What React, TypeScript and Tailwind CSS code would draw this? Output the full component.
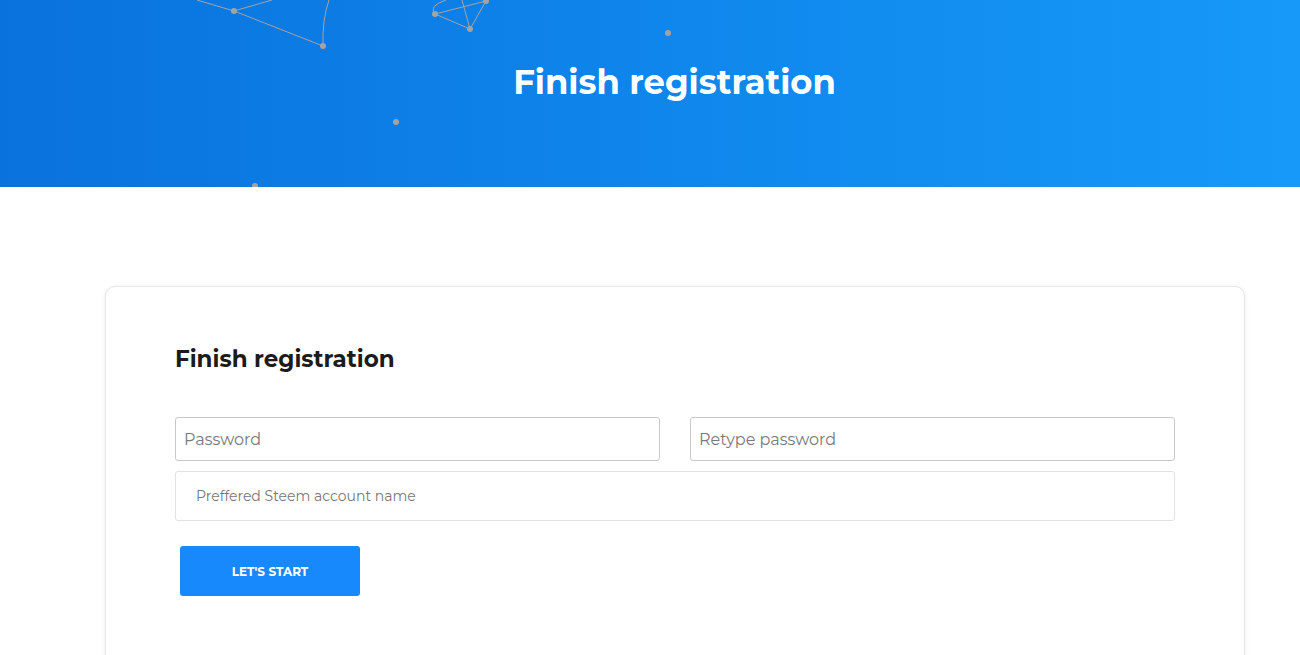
import React from "react";

const dots: [number, number][] = [
  [234, 11],
  [323, 46],
  [435, 14],
  [470, 29],
  [486, 1],
  [396, 122],
  [255, 186],
  [668, 33],
];

function Particles() {
  return (
    <svg
      className="absolute inset-0 h-full w-full"
      viewBox="0 0 1300 187"
      preserveAspectRatio="none"
    >
      <g stroke="#a3a3a3" strokeWidth="1" fill="none">
        <line x1="197" y1="0" x2="234" y2="11" />
        <line x1="234" y1="11" x2="272" y2="0" />
        <line x1="234" y1="11" x2="323" y2="46" />
        <path d="M323 46 Q322 20 329 0" />
        <line x1="435" y1="14" x2="470" y2="29" />
        <line x1="435" y1="14" x2="486" y2="1" />
        <line x1="486" y1="1" x2="470" y2="29" />
        <line x1="462" y1="0" x2="470" y2="29" />
        <path d="M435 14 Q428 6 446 0" />
      </g>
      <g fill="#a3a3a3">
        {dots.map(([x, y]) => (
          <circle key={`${x}-${y}`} cx={x} cy={y} r="3" />
        ))}
      </g>
    </svg>
  );
}

export default function App() {
  return (
    <div
      className="min-h-[655px] w-full overflow-hidden bg-white"
      style={{ fontFamily: "Montserrat, Inter, 'Open Sans', sans-serif" }}
    >
      <div className="relative h-[187px] w-full bg-gradient-to-r from-[#0a72dd] to-[#1699f8]">
        <Particles />
        <h1 className="relative pl-[49px] pt-[60px] text-center text-[33.8px] font-bold leading-[43px] text-white">
          Finish registration
        </h1>
      </div>

      <div className="pl-[105px] pr-[55px] pt-[99px]">
        <div className="h-[400px] rounded-[10px] border border-[#e6e6e6] bg-white px-[69px] pt-[57px] shadow-[0_1px_4px_rgba(0,0,0,0.08)]">
          <h2 className="text-[23px] font-bold leading-[30px] text-[#1b1b1b]">
            Finish registration
          </h2>

          <div className="mt-[43px] flex gap-[30px]">
            <input
              type="password"
              placeholder="Password"
              className="h-[44px] flex-1 rounded-[3px] border border-[#c8c8c8] px-[8px] text-[16px] text-[#333] placeholder:text-[#7a7a7a] focus:outline-none"
            />
            <input
              type="password"
              placeholder="Retype password"
              className="h-[44px] flex-1 rounded-[3px] border border-[#c8c8c8] px-[8px] text-[16px] text-[#333] placeholder:text-[#7a7a7a] focus:outline-none"
            />
          </div>

          <input
            type="text"
            placeholder="Preffered Steem account name"
            className="mt-[10px] h-[50px] w-full rounded-[3px] border border-[#e2e2e2] px-[20px] text-[14px] text-[#333] placeholder:text-[#777] focus:outline-none"
          />

          <button className="ml-[5px] mt-[25px] h-[50px] w-[180px] rounded-[3px] bg-[#1889fc] pt-[2px] text-[12px] font-bold uppercase text-white">
            Let's start
          </button>
        </div>
      </div>
    </div>
  );
}
